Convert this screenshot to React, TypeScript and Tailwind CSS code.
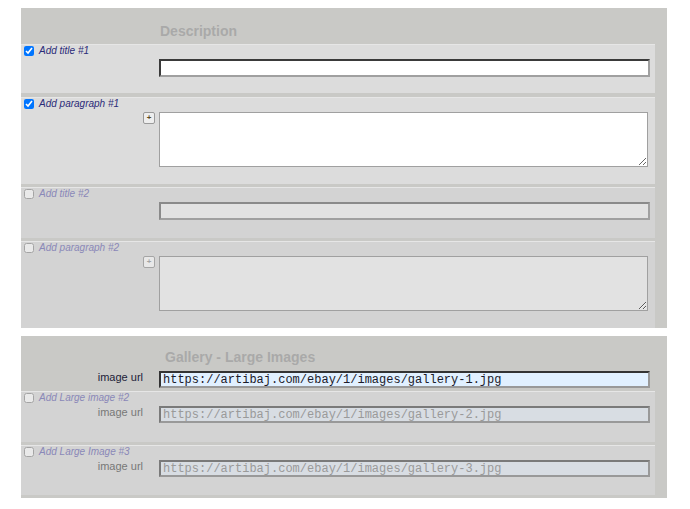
import type { ReactNode } from 'react';

const SANS = "font-['Liberation_Sans',Arial,sans-serif]";

function Check({ on }: { on: boolean }) {
  return (
    <input
      type="checkbox"
      defaultChecked={on}
      className={`m-0 w-[10px] h-[10px] ${on ? 'accent-[#0075ff]' : 'opacity-50'}`}
    />
  );
}

function PlusBtn({ on }: { on: boolean }) {
  return (
    <button
      type="button"
      className={`w-[12px] h-[12px] flex items-center justify-center rounded-[2px] border border-[#9a9a9a] bg-[#eeeeee] text-[8px] leading-none font-bold ${
        on ? 'text-[#5a4a20]' : 'text-[#999] opacity-80'
      }`}
    >
      +
    </button>
  );
}

function Row({
  label,
  on,
  gap,
  pb,
  children,
}: {
  label: string;
  on: boolean;
  gap: string;
  pb: string;
  children: ReactNode;
}) {
  return (
    <div
      className={`mr-[12px] ${gap} ${pb} border-t border-[#e6e6e6] ${
        on ? 'bg-[#dcdcdc]' : 'bg-[#d3d3d3]'
      }`}
    >
      <label className="h-[11px] mb-[3px] pl-[3px] flex items-center gap-[5px]">
        <Check on={on} />
        <span className={`text-[10px] italic ${on ? 'text-[#2b2b78]' : 'text-[#8a88b8]'}`}>
          {label}
        </span>
      </label>
      {children}
    </div>
  );
}

function TitleField({ on }: { on: boolean }) {
  return (
    <div className="flex">
      <div className="w-[138px] shrink-0" />
      <input
        type="text"
        disabled={!on}
        className={`flex-1 mr-[5px] h-[18px] border-2 border-t-[#3a3a3a] border-l-[#3a3a3a] border-b-[#a0a0a0] border-r-[#a0a0a0] outline-none ${
          on ? 'bg-white' : 'bg-[#e2e2e2] border-t-[#8a8a8a] border-l-[#8a8a8a]'
        }`}
      />
    </div>
  );
}

function ParagraphField({ on }: { on: boolean }) {
  return (
    <div className="flex">
      <div className="w-[138px] shrink-0 flex justify-end pr-[4px]">
        <PlusBtn on={on} />
      </div>
      <textarea
        disabled={!on}
        className={`flex-1 mr-[7px] h-[55px] border border-[#a0a0a0] outline-none resize-y ${
          on ? 'bg-white' : 'bg-[#e2e2e2]'
        }`}
      />
    </div>
  );
}

function UrlField({ on, url }: { on: boolean; url: string }) {
  return (
    <div className="flex items-start">
      <div
        className={`w-[138px] shrink-0 text-right pr-[16px] text-[11px] leading-[13px] ${
          on ? 'text-[#1c1c38]' : 'text-[#777]'
        }`}
      >
        image url
      </div>
      <input
        type="text"
        defaultValue={url}
        disabled={!on}
        className={`flex-1 mr-[5px] h-[17px] px-[2px] font-['Liberation_Mono','Courier_New',monospace] text-[12px] leading-none border-2 border-b-[#999] border-r-[#999] outline-none ${
          on
            ? 'bg-[#e1f0ff] text-[#1a1a2a] border-t-[#333] border-l-[#333]'
            : 'bg-[#d8dde3] text-[#9a9a9a] border-t-[#7a7a7a] border-l-[#7a7a7a]'
        }`}
      />
    </div>
  );
}

export default function App() {
  return (
    <div className={`w-[690px] h-[509px] bg-white pt-[8px] pl-[21px] ${SANS}`}>
      {/* description blocks */}
      <section className="w-[646px] bg-[#c9c9c6]">
        <h2 className="pl-[139px] pt-[15px] pb-[5px] text-[14px] leading-[16px] font-bold text-[#a9a9a9]">
          Description
        </h2>
        <Row label="Add title #1" on gap="" pb="pb-[16px]">
          <TitleField on />
        </Row>
        <Row label="Add paragraph #1" on gap="mt-[4px]" pb="pb-[17px]">
          <ParagraphField on />
        </Row>
        <Row label="Add title #2" on={false} gap="mt-[3px]" pb="pb-[18px]">
          <TitleField on={false} />
        </Row>
        <Row label="Add paragraph #2" on={false} gap="mt-[3px]" pb="pb-[17px]">
          <ParagraphField on={false} />
        </Row>
      </section>

      {/* gallery urls */}
      <section className="w-[646px] mt-[8px] pb-[3px] bg-[#c9c9c6]">
        <h2 className="pl-[144px] pt-[13px] pb-[6px] text-[14px] leading-[16px] font-bold text-[#a9a9a9]">
          Gallery - Large Images
        </h2>
        <div className="mr-[12px] pb-[3px]">
          <UrlField on url="https://artibaj.com/ebay/1/images/gallery-1.jpg" />
        </div>
        <Row label="Add Large image #2" on={false} gap="" pb="pb-[19px]">
          <UrlField on={false} url="https://artibaj.com/ebay/1/images/gallery-2.jpg" />
        </Row>
        <Row label="Add Large Image #3" on={false} gap="mt-[3px]" pb="pb-[18px]">
          <UrlField on={false} url="https://artibaj.com/ebay/1/images/gallery-3.jpg" />
        </Row>
      </section>
    </div>
  );
}
